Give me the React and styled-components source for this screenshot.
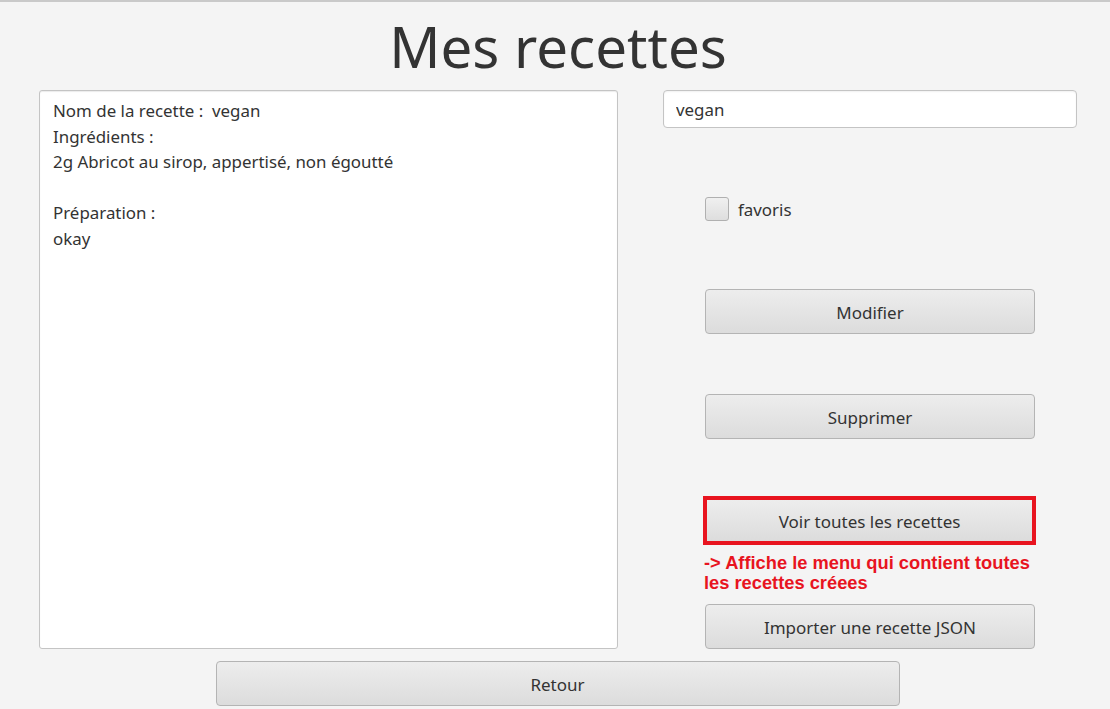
import React, { useState } from "react";
import styled, { createGlobalStyle } from "styled-components";

const GlobalStyle = createGlobalStyle`
  html, body {
    margin: 0;
    padding: 0;
    background: #f4f4f4;
  }
  body {
    font-family: "Noto Sans", "Open Sans", sans-serif;
    color: #333;
  }
`;

const Page = styled.div`
  width: 1110px;
  height: 709px;
  box-sizing: border-box;
  border-top: 2px solid #c9c9c9;
  background: #f4f4f4;
  display: flex;
  flex-direction: column;
  align-items: center;
  overflow: hidden;
`;

const Title = styled.h1`
  margin: 0;
  height: 88px;
  font-size: 56.5px;
  font-weight: 400;
  line-height: 90px;
  color: #333;
  padding-left: 6px;
`;

const Main = styled.div`
  width: 100%;
  display: grid;
  grid-template-columns: 579px 414px;
  column-gap: 45px;
  padding-left: 39px;
  box-sizing: border-box;
`;

const RecipeBox = styled.div`
  height: 559px;
  box-sizing: border-box;
  background: #fff;
  border: 1px solid #c4c4c4;
  border-radius: 3px;
  box-shadow: inset 0 1px 1px rgba(0, 0, 0, 0.08);
  padding: 7px 13px;
  font-size: 16.9px;
  line-height: 25.5px;
  color: #333;
  white-space: pre-wrap;
`;

const Side = styled.div`
  display: flex;
  flex-direction: column;
`;

const TextField = styled.input`
  height: 38px;
  box-sizing: border-box;
  border: 1px solid #c4c4c4;
  border-radius: 4px;
  background: #fff;
  box-shadow: inset 0 1px 2px rgba(0, 0, 0, 0.06);
  padding: 0 12px;
  font-family: inherit;
  font-size: 16.9px;
  color: #333;
  outline: none;
`;

const Indented = styled.div`
  margin-left: 42px;
  width: 330px;
  margin-top: ${(p) => p.$top}px;
`;

const CheckRow = styled.label`
  display: flex;
  align-items: center;
  gap: 9px;
  font-size: 16.9px;
  color: #333;
`;

const Box = styled.span`
  width: 24px;
  height: 24px;
  box-sizing: border-box;
  border: 1px solid #b0b0b0;
  border-radius: 3px;
  background: linear-gradient(#f0f0f0, #dedede);
`;

const Button = styled.button`
  width: ${(p) => p.$w || 330}px;
  height: 45px;
  box-sizing: border-box;
  border: 1px solid #b4b4b4;
  border-radius: 4px;
  background: linear-gradient(#ededed, #dcdcdc);
  font-family: inherit;
  font-size: 17px;
  color: #333;
  padding: 2px 0 0;
  display: block;
`;

const Highlight = styled.div`
  width: 333px;
  height: 49px;
  margin-left: -2px;
  box-sizing: border-box;
  border: 4px solid #e8141f;
  display: flex;
  align-items: center;
  justify-content: center;
  background: #f4f4f4;

  ${Button} {
    width: 325px;
    height: 41px;
    border: none;
    border-radius: 0;
  }
`;

const Note = styled.div`
  margin-top: 8px;
  font-family: "Liberation Sans", Arial, sans-serif;
  font-weight: 700;
  font-size: 18.3px;
  line-height: 20px;
  color: #e8141f;
  width: 334px;
  margin-left: -1px;
`;

const Footer = styled.div`
  margin-top: 12px;
  display: flex;
  justify-content: center;
  width: 100%;
  padding-left: 5px;
  box-sizing: border-box;
`;

export default function App() {
  const [name, setName] = useState("vegan");

  return (
    <Page>
      <GlobalStyle />
      <Title>Mes recettes</Title>
      <Main>
        <RecipeBox>
          {"Nom de la recette :  vegan\nIngrédients :\n2g Abricot au sirop, appertisé, non égoutté\n\nPréparation :\nokay"}
        </RecipeBox>
        <Side>
          <TextField value={name} onChange={(e) => setName(e.target.value)} />
          <Indented $top={69}>
            <CheckRow>
              <Box />
              favoris
            </CheckRow>
          </Indented>
          <Indented $top={68}>
            <Button>Modifier</Button>
          </Indented>
          <Indented $top={60}>
            <Button>Supprimer</Button>
          </Indented>
          <Indented $top={57}>
            <Highlight>
              <Button>Voir toutes les recettes</Button>
            </Highlight>
            <Note>
              -&gt; Affiche le menu qui contient toutes les recettes créees
            </Note>
          </Indented>
          <Indented $top={11}>
            <Button>Importer une recette JSON</Button>
          </Indented>
        </Side>
      </Main>
      <Footer>
        <Button $w={684}>Retour</Button>
      </Footer>
    </Page>
  );
}
